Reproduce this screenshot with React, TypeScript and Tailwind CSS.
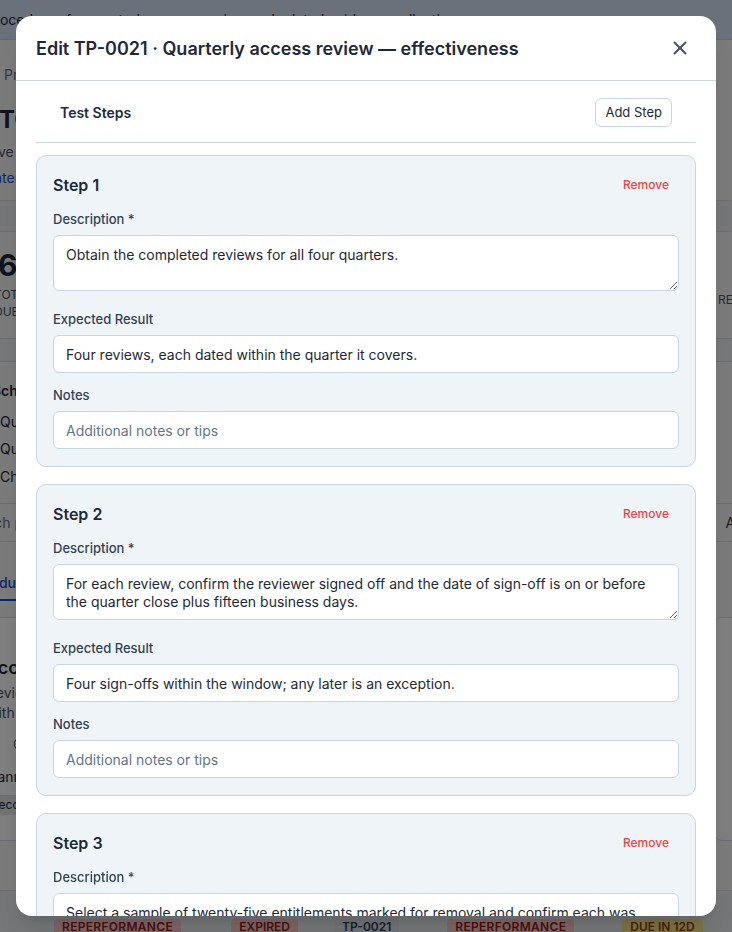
import React from "react";
import { X, Clock } from "lucide-react";

const inputCls =
  "block w-full h-[38px] rounded-md border border-[#c8d5e3] bg-white px-3 text-sm text-[#1e293b] placeholder:text-[#64748b] outline-none";

function StepCard({ n, description, expected }: { n: number; description: string; expected: string }) {
  return (
    <div className="rounded-[10px] border border-[#c8d5e3] bg-[#eff4f9] px-4 pb-[17px] pt-4">
      <div className="flex h-[25px] items-center justify-between">
        <span className="text-base font-semibold text-[#1e293b]">Step {n}</span>
        <button className="px-[10px] text-xs font-medium text-[#ef4444]">Remove</button>
      </div>
      <div className="mt-3 flex flex-col gap-3">
        <div className="pb-[6px]">
          <label className="mb-1.5 block text-[13px] font-medium leading-5 text-[#334155]">Description *</label>
          <textarea
            readOnly
            defaultValue={description}
            className="block h-[56px] w-full resize-y rounded-md border border-[#c8d5e3] bg-white px-3 py-2.5 text-sm leading-[17.5px] text-[#1e293b] outline-none"
          />
        </div>
        <div>
          <label className="mb-1.5 block text-[13px] font-medium leading-5 text-[#334155]">Expected Result</label>
          <input readOnly defaultValue={expected} className={inputCls} />
        </div>
        <div>
          <label className="mb-1.5 block text-[13px] font-medium leading-5 text-[#334155]">Notes</label>
          <input readOnly placeholder="Additional notes or tips" className={inputCls} />
        </div>
      </div>
    </div>
  );
}

function Background() {
  return (
    <div className="flex h-[932px] w-full flex-col overflow-hidden bg-[#f6f6f7] text-[#1e293b]">
      <div className="flex h-10 shrink-0 items-center whitespace-nowrap border-b border-[#c7d2e2] bg-[#d6e2f6] text-sm">
        <span className="-ml-[14px]">Procedures for quarterly access review and related evidence collection</span>
      </div>
      <div className="flex h-[160px] shrink-0 flex-col whitespace-nowrap">
        <div className="mt-[25px] pl-[4px] text-sm leading-5 text-[#64748b]">Procedures / TP-0021</div>
        <div className="-ml-[1px] mt-[19px] text-2xl font-bold leading-8">TOOL ACCESS</div>
        <div className="-ml-[2px] mt-[6px] text-sm leading-5 text-[#475569]">ve effectiveness of the quarterly review</div>
        <div className="-ml-[10px] mt-[6px] text-sm leading-5 text-[#1d4ed8]">Internal Policy</div>
      </div>
      <div className="h-[32px] shrink-0 border-y border-[#d8dde6] bg-[#eceef2]" />
      <div className="flex h-[106px] shrink-0 whitespace-nowrap">
        <div className="w-[712px] shrink-0">
          <div className="-ml-[2px] mt-[15px] text-3xl font-bold leading-9">6</div>
          <div className="-ml-[6px] mt-[4px] text-xs uppercase leading-4 text-[#475569]">TOTAL</div>
          <div className="-ml-[6px] mt-[1px] text-xs uppercase leading-4 text-[#475569]">DUE</div>
        </div>
        <div className="pl-[6px] pt-[60px] text-xs uppercase leading-4 text-[#475569]">REVIEWS</div>
      </div>
      <div className="h-[24px] shrink-0 border-y border-[#d8dde6] bg-[#eef0f3]" />
      <div className="flex h-[141px] shrink-0 flex-col whitespace-nowrap text-sm">
        <div className="-ml-[8px] mt-[19px] font-semibold leading-5">Scheduled</div>
        <div className="mt-[11px] leading-5">Quarterly review Q1</div>
        <div className="mt-[7px] leading-5">Quarterly review Q2</div>
        <div className="mt-[8px] leading-5">Change control</div>
      </div>
      <div className="flex h-[39px] shrink-0 items-center justify-between whitespace-nowrap border-y border-[#d8dde6] text-sm">
        <span className="-ml-[36px] text-[#64748b]">Search procedures</span>
        <span className="mr-[-10px] text-[#334155]">All</span>
      </div>
      <div className="flex h-[59px] shrink-0 items-end whitespace-nowrap text-sm">
        <span className="-ml-[40px] border-b-2 border-[#1d4ed8] pb-[6px] font-medium text-[#1d4ed8]">Procedures</span>
      </div>
      <div className="flex h-[240px] shrink-0 gap-4 pt-4">
        <div className="-ml-[30px] w-[728px] shrink-0 rounded-lg border border-[#d8dde6] bg-white px-4 pt-[36px]">
          <div className="-ml-[2px] text-lg font-semibold leading-7">Access review</div>
          <div className="mt-[1px] text-sm leading-5 text-[#475569]">Review accounts</div>
          <div className="text-sm leading-5 text-[#475569]">with access</div>
          <div className="mt-[14px] flex items-center gap-1 text-[#64748b]">
            <span className="w-[22px]" />
            <Clock size={14} />
          </div>
          <div className="mt-[16px] text-sm leading-5">Hannah</div>
          <div className="mt-[8px] inline-block rounded bg-[#e5e7eb] px-1 text-xs leading-5">Recovery</div>
        </div>
        <div className="w-[300px] shrink-0 rounded-lg border border-[#d8dde6] bg-white" />
      </div>
      <div className="h-[50px] shrink-0 border-b border-[#d8dde6]" />
      <div className="grid flex-1 grid-cols-[318px_1fr] gap-4 bg-[#eceef2] pt-[28px]">
        <div className="flex items-start justify-between pl-[54px] pr-[20px]">
          <span className="rounded bg-[#fecaca] px-2 text-xs font-semibold tracking-wide text-[#991b1b]">REPERFORMANCE</span>
          <span className="rounded bg-[#fecaca] px-2 text-xs font-semibold text-[#991b1b]">EXPIRED</span>
        </div>
        <div className="flex items-start gap-12">
          <span className="rounded bg-[#e2e8f0] px-2 text-xs font-semibold text-[#334155]">TP-0021</span>
          <span className="rounded bg-[#fecaca] px-2 text-xs font-semibold tracking-wide text-[#991b1b]">REPERFORMANCE</span>
          <span className="rounded bg-[#fde68a] px-2 text-xs font-semibold text-[#92400e]">DUE IN 12D</span>
        </div>
      </div>
    </div>
  );
}

export default function App() {
  return (
    <div className="relative h-[932px] w-full overflow-hidden font-['Inter','Noto_Sans',sans-serif]">
      <Background />
      <div className="absolute inset-0 flex justify-center bg-black/50 pt-4">
        <div className="flex h-[900px] w-[700px] flex-col overflow-hidden rounded-2xl bg-white shadow-xl">
          <div className="flex h-[65px] shrink-0 items-center justify-between border-b border-[#c8d5e3] pl-5 pr-[25px]">
            <h2 className="text-[18px] font-semibold text-[#1e293b]">
              Edit TP-0021 · Quarterly access review — effectiveness
            </h2>
            <X size={22} strokeWidth={2.2} className="text-[#475569]" />
          </div>
          <div className="flex-1 overflow-hidden px-5 pt-4">
            <div className="flex h-[46px] items-start justify-between border-b border-[#c8d5e3] px-6">
              <div className="flex h-[31px] items-center pt-[1px] text-sm font-semibold text-[#1e293b]">Test Steps</div>
              <button className="mt-[1px] h-[29px] rounded-md border border-[#c8d5e3] bg-white px-[9px] text-[13px] font-normal text-[#1e293b]">
                Add Step
              </button>
            </div>
            <div className="mt-3 flex flex-col gap-[17px]">
              <StepCard
                n={1}
                description="Obtain the completed reviews for all four quarters."
                expected="Four reviews, each dated within the quarter it covers."
              />
              <StepCard
                n={2}
                description="For each review, confirm the reviewer signed off and the date of sign-off is on or before the quarter close plus fifteen business days."
                expected="Four sign-offs within the window; any later is an exception."
              />
              <StepCard
                n={3}
                description="Select a sample of twenty-five entitlements marked for removal and confirm each was removed within five business days."
                expected="All twenty-five removed within the window."
              />
            </div>
          </div>
        </div>
      </div>
    </div>
  );
}
